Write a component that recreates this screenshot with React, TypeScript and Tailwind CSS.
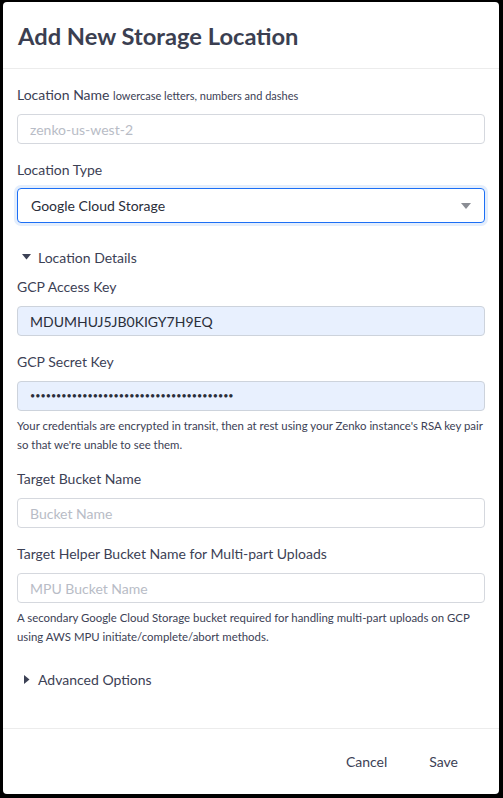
import React from "react";

const font = { fontFamily: "Lato, 'Noto Sans', sans-serif" };

function Label({ children }: { children: React.ReactNode }) {
  return <div className="text-[14px] leading-[20px] text-[#3c4155]">{children}</div>;
}

function Input({ value, placeholder, filled, small }: { value?: string; placeholder?: string; filled?: boolean; small?: boolean }) {
  return (
    <div
      className={
        "h-[30px] rounded-[4px] border flex items-center px-[12px] " +
        (small ? "text-[9px] tracking-[0px] " : "text-[14px] ") +
        (filled ? "bg-[#e8f0fe] border-[#cdd3dc] text-[#2a2e3a]" : "bg-white border-[#d5d8de] text-[#b8bcc6]")
      }
    >
      {value ?? placeholder}
    </div>
  );
}

export default function App() {
  return (
    <div className="w-[503px] h-[798px] bg-black pt-[2px] pl-[3px] pr-[4px] pb-[4px]" style={font}>
      <div className="w-[496px] h-[792px] bg-white rounded-[4px] flex flex-col">
        <div className="h-[67px] border-b border-[#ececec] flex items-center px-[15px] pt-[2px]">
          <h1 className="text-[23.7px] font-bold text-[#3b3f51] leading-[30px]">Add New Storage Location</h1>
        </div>
        <div className="flex-1 flex flex-col px-[14px]">
          <div className="mt-[16px] text-[14px] leading-[20px] text-[#3c4155]">
            Location Name <span className="text-[11px]">lowercase letters, numbers and dashes</span>
          </div>
          <div className="mt-[8px]">
            <Input placeholder="zenko-us-west-2" />
          </div>
          <div className="mt-[16px]">
            <Label>Location Type</Label>
          </div>
          <div className="mt-[8px] h-[35px] rounded-[4px] border border-[#1c6ff5] shadow-[0_0_0_3px_#e4eefc] flex items-center justify-between pl-[13px] pr-[13px] text-[14px] text-[#2a2e3a]">
            <span>Google Cloud Storage</span>
            <svg width="10" height="6" viewBox="0 0 10 6">
              <path d="M0 0 L10 0 L5 6 Z" fill="#8a8d94" />
            </svg>
          </div>
          <div className="mt-[24px] flex items-center h-[20px] text-[14px] text-[#3c4155]">
            <svg width="9" height="6" viewBox="0 0 9 6" className="ml-[5px] mr-[7px]">
              <path d="M0 0 L9 0 L4.5 5.5 Z" fill="#3c4155" />
            </svg>
            Location Details
          </div>
          <div className="mt-[10px]">
            <Label>GCP Access Key</Label>
          </div>
          <div className="mt-[9px]">
            <Input value="MDUMHUJ5JB0KIGY7H9EQ" filled />
          </div>
          <div className="mt-[16px]">
            <Label>GCP Secret Key</Label>
          </div>
          <div className="mt-[9px]">
            <Input value="•••••••••••••••••••••••••••••••••••••••" filled small />
          </div>
          <div className="mt-[5px] text-[11.4px] leading-[19px] text-[#3c4155]">
            Your credentials are encrypted in transit, then at rest using your Zenko instance's RSA key pair so that we're unable to see them.
          </div>
          <div className="mt-[15px]">
            <Label>Target Bucket Name</Label>
          </div>
          <div className="mt-[9px]">
            <Input placeholder="Bucket Name" />
          </div>
          <div className="mt-[16px]">
            <Label>Target Helper Bucket Name for Multi-part Uploads</Label>
          </div>
          <div className="mt-[9px]">
            <Input placeholder="MPU Bucket Name" />
          </div>
          <div className="mt-[5px] text-[11.4px] leading-[19px] text-[#3c4155]">
            A secondary Google Cloud Storage bucket required for handling multi-part uploads on GCP using AWS MPU initiate/complete/abort methods.
          </div>
          <div className="mt-[23px] flex items-center h-[20px] text-[14px] text-[#3c4155]">
            <svg width="6" height="9" viewBox="0 0 6 9" className="ml-[7px] mr-[8px]">
              <path d="M0 0 L5.5 4.5 L0 9 Z" fill="#3c4155" />
            </svg>
            Advanced Options
          </div>
        </div>
        <div className="h-[66px] border-t border-[#ececec] flex items-center justify-end pr-[41px] text-[14px] text-[#3c4155]">
          <span className="mr-[42px]">Cancel</span>
          <span>Save</span>
        </div>
      </div>
    </div>
  );
}
